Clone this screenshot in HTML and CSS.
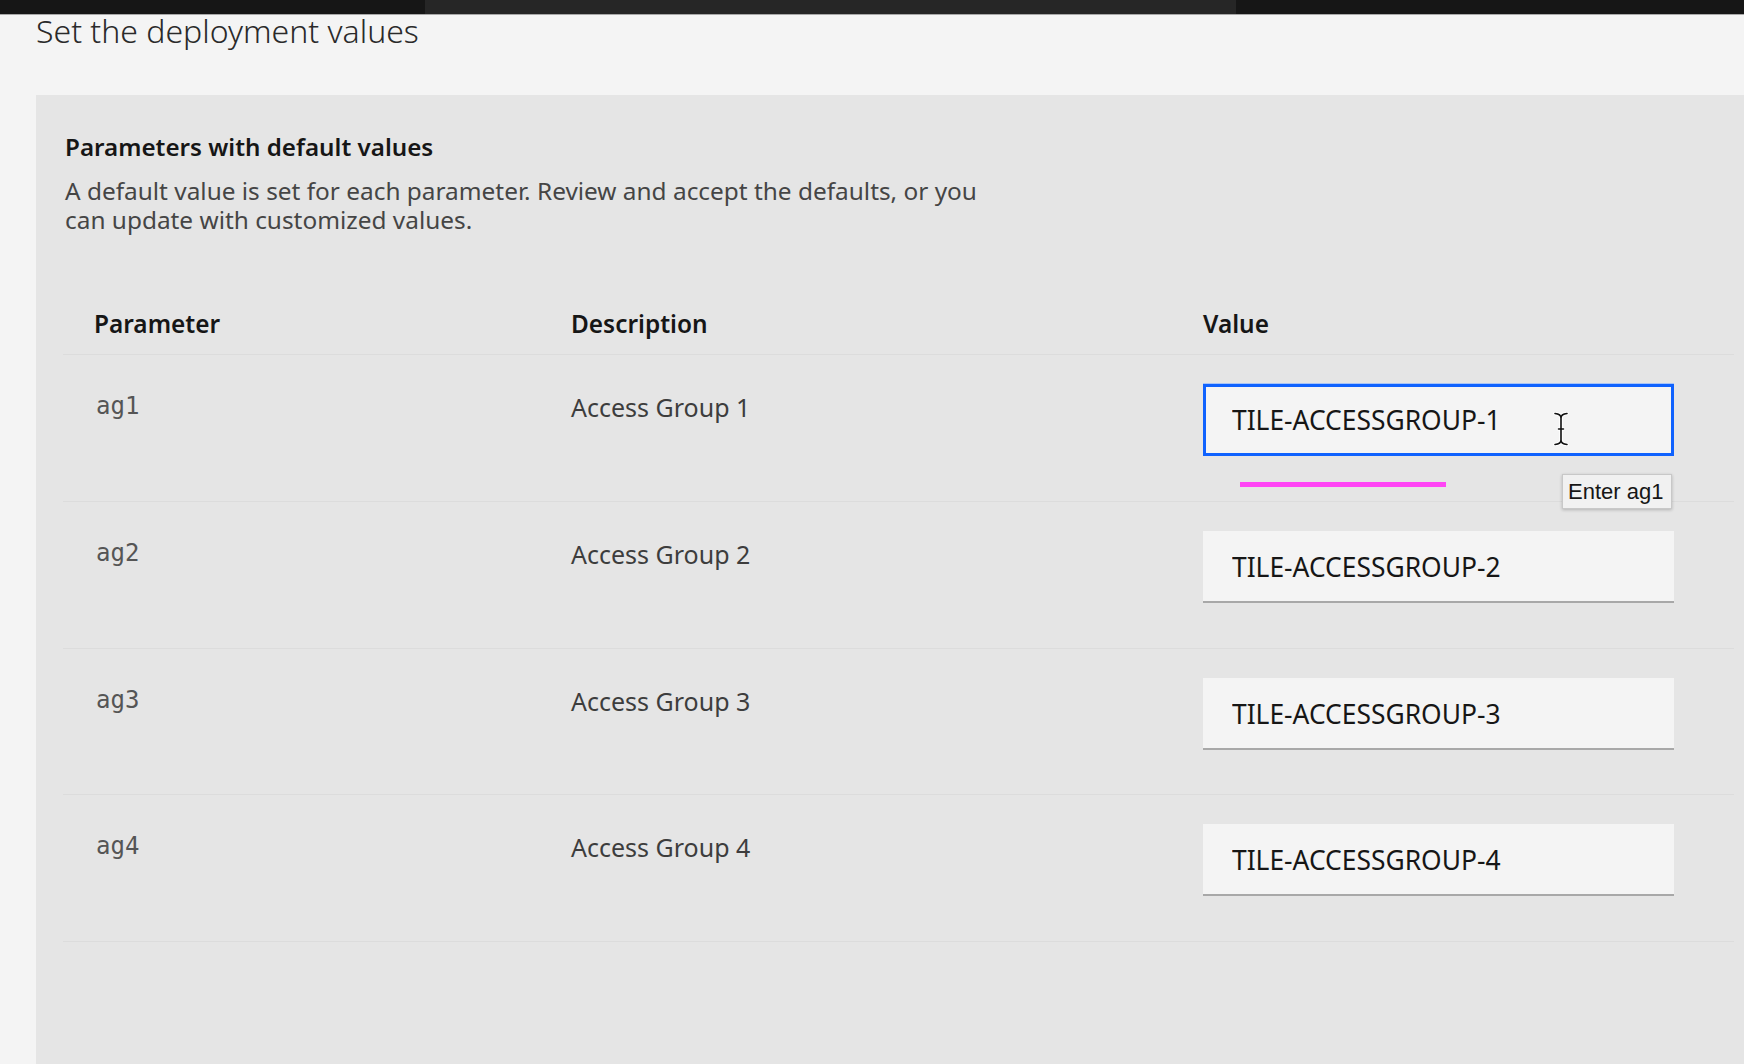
FILE: index.html
```html
<!DOCTYPE html>
<html lang="en">
<head>
<meta charset="utf-8">
<title>Set the deployment values</title>
<link rel="stylesheet" href="styles.css">
</head>
<body>
<header class="topbar">
  <div class="topbar-seg topbar-seg-a"></div>
  <div class="topbar-seg topbar-seg-b"></div>
  <div class="topbar-seg topbar-seg-c"></div>
</header>
<main class="page">
  <h1 class="page-title">Set the deployment values</h1>
  <section class="panel">
    <h2 class="panel-title">Parameters with default values</h2>
    <p class="panel-desc">A default value is set for each parameter. Review and accept the defaults, or you can update with customized values.</p>

    <div class="table">
      <div class="row row-head">
        <div class="cell cell-head">Parameter</div>
        <div class="cell cell-head">Description</div>
        <div class="cell cell-head">Value</div>
      </div>

      <div class="row">
        <div class="cell cell-param">ag1</div>
        <div class="cell cell-desc">Access Group 1</div>
        <div class="cell cell-value">
          <input class="field field-focused" type="text" value="TILE-ACCESSGROUP-1" title="Enter ag1">
          <div class="mark-line"></div>
          <svg class="ibeam" width="16" height="34" viewBox="0 0 16 34" aria-hidden="true">
            <g fill="none" stroke-linecap="round">
              <path d="M2 1.5 Q8 2 8 6 Q8 2 14 1.5 M8 6 V28 M2 32.5 Q8 32 8 28 Q8 32 14 32.5 M5.5 17 H10.5" stroke="#ffffff" stroke-width="3.6"/>
              <path d="M2 1.5 Q8 2 8 6 Q8 2 14 1.5 M8 6 V28 M2 32.5 Q8 32 8 28 Q8 32 14 32.5 M5.5 17 H10.5" stroke="#111111" stroke-width="1.6"/>
            </g>
          </svg>
          <div class="tooltip">Enter ag1</div>
        </div>
      </div>

      <div class="row">
        <div class="cell cell-param">ag2</div>
        <div class="cell cell-desc">Access Group 2</div>
        <div class="cell cell-value">
          <input class="field" type="text" value="TILE-ACCESSGROUP-2" title="Enter ag2">
        </div>
      </div>

      <div class="row">
        <div class="cell cell-param">ag3</div>
        <div class="cell cell-desc">Access Group 3</div>
        <div class="cell cell-value">
          <input class="field" type="text" value="TILE-ACCESSGROUP-3" title="Enter ag3">
        </div>
      </div>

      <div class="row">
        <div class="cell cell-param">ag4</div>
        <div class="cell cell-desc">Access Group 4</div>
        <div class="cell cell-value">
          <input class="field" type="text" value="TILE-ACCESSGROUP-4" title="Enter ag4">
        </div>
      </div>
    </div>
  </section>
</main>
</body>
</html>
```
FILE: styles.css
```css
* { box-sizing: border-box; }

html, body {
  margin: 0;
  padding: 0;
  height: 100%;
  overflow: hidden;
}

body {
  background: #f4f4f4;
  font-family: "Noto Sans", "Liberation Sans", Arial, sans-serif;
  color: #161616;
}

/* top bar */
.topbar {
  display: flex;
  height: 15px;
  border-bottom: 1px solid #a8a8a8;
  background: #161616;
}
.topbar-seg { height: 14px; }
.topbar-seg-a { width: 425px; background: #161616; }
.topbar-seg-b { width: 811px; background: #262626; }
.topbar-seg-c { flex: 1; background: #161616; }

/* page */
.page {
  padding-left: 36px;
}

.page-title {
  margin: 0;
  font-size: 32px;
  line-height: 32px;
  font-weight: 300;
  color: #2a2a2a;
}

.panel {
  margin-top: 48px;
  min-height: 969px;
  background: #e5e5e5;
  padding: 37px 10px 0 27px;
}

.panel-title {
  margin: 0;
  padding-left: 2px;
  font-size: 24.2px;
  line-height: 30px;
  font-weight: 600;
  color: #161616;
}

.panel-desc {
  margin: 14px 0 0;
  padding-left: 2px;
  max-width: 940px;
  font-size: 24.4px;
  line-height: 29px;
  font-weight: 400;
  color: #454545;
}

/* table */
.table {
  margin-top: 60px;
}

.row {
  display: grid;
  grid-template-columns: 477px 632px 1fr;
  border-bottom: 1px solid #dcdcdc;
}

.cell {
  padding-left: 31px;
}

.row-head .cell {
  padding-top: 15px;
  padding-bottom: 15px;
}

.cell-head {
  font-size: 24.4px;
  line-height: 30px;
  font-weight: 600;
  color: #161616;
}

.cell-param {
  padding-top: 36px;
  padding-left: 33px;
  font-family: "DejaVu Sans Mono", "Liberation Mono", monospace;
  font-size: 24px;
  line-height: 30px;
  color: #555555;
}

.cell-desc {
  padding-top: 37px;
  font-size: 25px;
  line-height: 30px;
  color: #3d3d3d;
}

.cell-value {
  position: relative;
  padding-top: 29px;
  padding-bottom: 44.75px;
}

.field {
  display: block;
  width: 471px;
  height: 72px;
  margin: 0;
  padding: 2px 16px 0 29px;
  border: 0;
  border-bottom: 2px solid #a8a8a8;
  border-radius: 0;
  background: #f4f4f4;
  font-family: "Noto Sans", "Liberation Sans", Arial, sans-serif;
  font-size: 26.4px;
  color: #161616;
  outline: none;
}

.field-focused {
  border-bottom-color: transparent;
  outline: 3px solid #0f62fe;
  outline-offset: -3px;
  box-shadow: 0 -1px 0 #a8c4f8;
}

.mark-line {
  position: absolute;
  left: 68px;
  top: 127px;
  width: 206px;
  height: 5px;
  background: #ff45f5;
}

.ibeam {
  position: absolute;
  left: 381px;
  top: 57px;
}

.tooltip {
  position: absolute;
  left: 390px;
  top: 119px;
  z-index: 2;
  padding: 0 8px 0 5px;
  border: 1px solid #c8c8c8;
  background: #f1f1f1;
  box-shadow: 0 1px 3px rgba(0, 0, 0, 0.22);
  font-family: "Liberation Sans", Arial, sans-serif;
  font-size: 22px;
  line-height: 33px;
  color: #161616;
  white-space: nowrap;
}
```
